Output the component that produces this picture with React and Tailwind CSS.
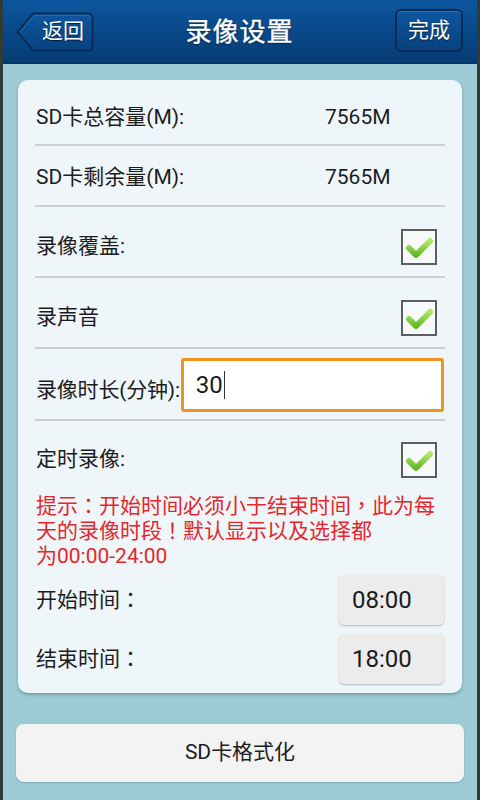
import React from "react";

const FONT = "font-['Roboto','Noto_Sans_CJK_SC',sans-serif]";

function P({ children }) {
  return <span className="font-['Roboto','Noto_Sans_CJK_TC',sans-serif]">{children}</span>;
}

function Check() {
  return (
    <div className="w-[36px] h-[36px] border-2 border-[#5c5f60] bg-[#f7f9fa] flex items-center justify-center shrink-0">
      <svg width="30" height="30" viewBox="0 0 30 30">
        <defs>
          <linearGradient id="cg" x1="0" y1="0" x2="0" y2="1">
            <stop offset="0" stopColor="#b0e66a" />
            <stop offset="1" stopColor="#62ba25" />
          </linearGradient>
        </defs>
        <path
          d="M5 16 L12 23 L26 9"
          fill="none"
          stroke="url(#cg)"
          strokeWidth="6"
          strokeLinecap="round"
          strokeLinejoin="round"
        />
      </svg>
    </div>
  );
}

function Divider() {
  return <div className="h-[2px] bg-[#c9cfd2]" />;
}

export default function App() {
  return (
    <div className={`w-[480px] h-[800px] flex bg-[#9ccbd6] ${FONT} overflow-hidden`}>
      <div className="w-[3px] bg-[#2e3b37] shrink-0" />
      <div className="flex-1 flex flex-col">
        {/* Header */}
        <div className="h-[64px] flex items-center bg-gradient-to-b from-[#0d57a0] to-[#063b73] border-b border-[#05305c]">
          <div className="flex-1 flex items-center pl-[13px]">
            <div className="relative w-[78px] h-[40px] flex items-center pl-[26px]">
              <svg className="absolute inset-0" width="78" height="40" viewBox="0 0 78 40">
                <defs>
                  <linearGradient id="bg1" x1="0" y1="0" x2="0" y2="1">
                    <stop offset="0" stopColor="#0e56a0" />
                    <stop offset="1" stopColor="#08427f" />
                  </linearGradient>
                </defs>
                <path
                  d="M1.5 20 L17 1.5 H72 Q76.5 1.5 76.5 6 V34 Q76.5 38.5 72 38.5 H17 Z"
                  fill="url(#bg1)"
                  stroke="#062d57"
                  strokeWidth="2"
                />
                <path
                  d="M4 20 L18 3.5 H72 Q74.5 3.5 74.5 6"
                  fill="none"
                  stroke="#2a6db0"
                  strokeWidth="1"
                />
              </svg>
              <span className="relative text-white text-[21px] leading-none [text-shadow:0_1px_1px_rgba(0,0,0,0.6)]">返回</span>
            </div>
          </div>
          <div className="text-white text-[26px] leading-none [text-shadow:0_1px_2px_rgba(0,0,0,0.6)] tracking-[1px] [-webkit-text-stroke:0.4px_white]">
            录像设置
          </div>
          <div className="flex-1 flex justify-end pr-[14px]">
            <div className="w-[68px] h-[43px] rounded-[6px] border-2 border-[#062d57] bg-gradient-to-b from-[#0e56a0] to-[#08427f] shadow-[inset_0_1px_0_rgba(120,170,230,0.35)] flex items-center justify-center -mt-[2px]">
              <span className="text-white text-[21px] leading-none [text-shadow:0_1px_1px_rgba(0,0,0,0.6)]">完成</span>
            </div>
          </div>
        </div>

        {/* Card */}
        <div className="mx-[15px] mt-[16px] rounded-[10px] bg-[#eff6f9] shadow-[0_2px_3px_rgba(40,80,90,0.35)] px-[17px] pb-[9px] flex flex-col text-[21px] text-[#1c1c1c]">
          <div className="h-[64px] pt-3 flex items-center">
            <span className="w-[290px] pl-px">SD卡总容量(M):</span>
            <span className="text-[21px]">7565M</span>
          </div>
          <Divider />
          <div className="h-[59px] pt-[5px] flex items-center">
            <span className="w-[290px] pl-px">SD卡剩余量(M):</span>
            <span className="text-[21px]">7565M</span>
          </div>
          <Divider />
          <div className="h-[69px] pt-[10px] flex items-center justify-between pr-[8px]">
            <span className="pl-px">录像覆盖:</span>
            <Check />
          </div>
          <Divider />
          <div className="h-[69px] pt-[10px] flex items-center justify-between pr-[8px]">
            <span className="pl-px">录声音</span>
            <Check />
          </div>
          <Divider />
          <div className="h-[70px] pt-[9px] flex items-start">
            <span className="pl-px mt-[17px] whitespace-nowrap tracking-[-0.2px]">录像时长(分钟):</span>
            <div className="flex-1 h-[54px] ml-[1px] mr-[1px] rounded-[3px] border-[3px] border-[#f29320] bg-white flex items-center pl-[12px]">
              <span className="text-[24px] text-[#1a1a1a] leading-none">30</span>
              <span className="w-[1.5px] h-[28px] bg-[#333] ml-[1px]" />
            </div>
          </div>
          <Divider />
          <div className="pt-[21px] flex items-center justify-between pr-[8px]">
            <span className="pl-px">定时录像:</span>
            <Check />
          </div>
          <div className="mt-[16px] text-[21px] leading-[25px] text-[#e5262c] pl-px">
            提示<P>：</P>开始时间必须小于结束时间<P>，</P>此为每
            <br />
            天的录像时段<P>！</P>默认显示以及选择都
            <br />
            为00:00-24:00
          </div>
          <div className="mt-[6px] h-[50px] flex items-center justify-between pr-px">
            <span className="pl-px leading-[25px]">开始时间<P>：</P></span>
            <div className="w-[105px] h-[50px] rounded-[5px] bg-[#ececec] shadow-[0_1px_2px_rgba(0,0,0,0.25)] flex items-center pl-[13px] text-[24px] text-[#1a1a1a]">
              08:00
            </div>
          </div>
          <div className="mt-[9px] h-[50px] flex items-center justify-between pr-px">
            <span className="pl-px leading-[25px]">结束时间<P>：</P></span>
            <div className="w-[105px] h-[50px] rounded-[5px] bg-[#ececec] shadow-[0_1px_2px_rgba(0,0,0,0.25)] flex items-center pl-[13px] text-[24px] text-[#1a1a1a]">
              18:00
            </div>
          </div>
        </div>

        {/* Format button */}
        <div className="mx-[13px] mt-[31px] h-[58px] rounded-[8px] bg-[#f3f3f3] shadow-[0_1px_2px_rgba(0,0,0,0.2)] flex items-center justify-center text-[21px] text-[#1c1c1c]">
          SD卡格式化
        </div>
      </div>
      <div className="w-[3px] bg-[#2e3b37] shrink-0" />
    </div>
  );
}
